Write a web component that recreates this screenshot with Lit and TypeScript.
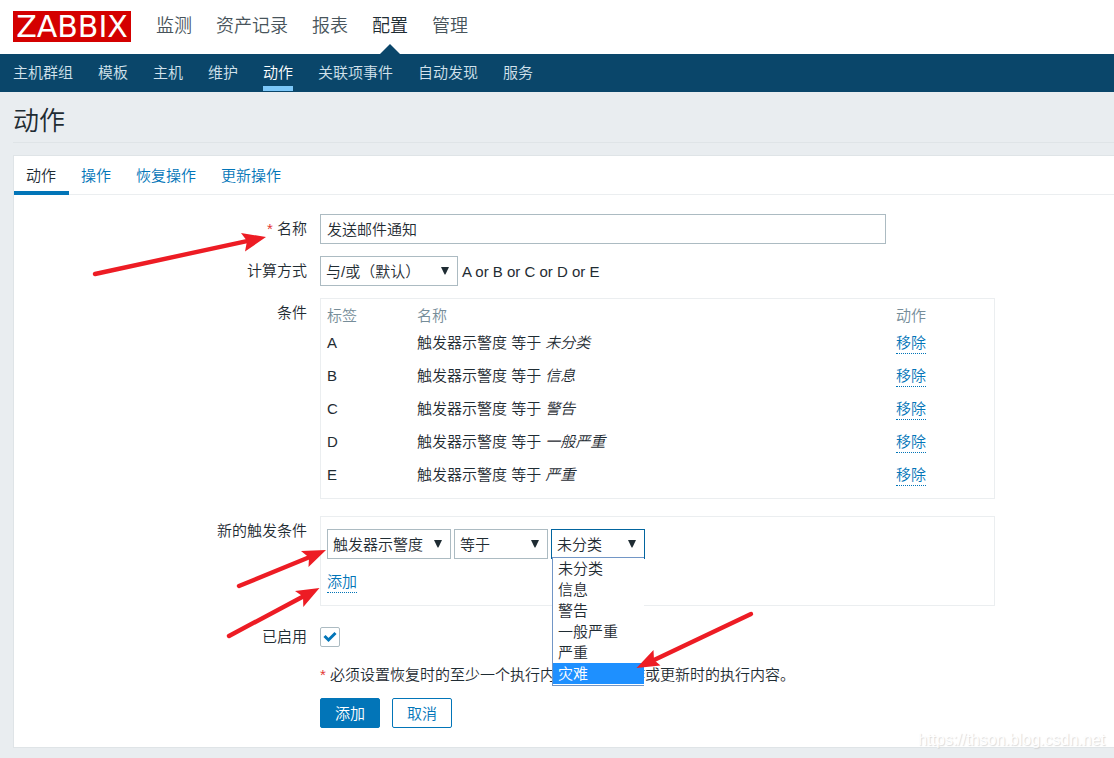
import { LitElement, html, css } from "lit";
import { customElement, state } from "lit/decorators.js";
import { classMap } from "lit/directives/class-map.js";

interface Condition {
  label: string;
  severity: string;
}

const MAIN_MENU = ["监测", "资产记录", "报表", "配置", "管理"];
const SUB_MENU = ["主机群组", "模板", "主机", "维护", "动作", "关联项事件", "自动发现", "服务"];
const TABS = ["动作", "操作", "恢复操作", "更新操作"];
const SEVERITIES = ["未分类", "信息", "警告", "一般严重", "严重", "灾难"];

const caret = html`<svg class="caret" width="8" height="8" viewBox="0 0 8 8" aria-hidden="true">
  <path d="M0 0h8L4.4 7.5h-.8z" fill="#1f2c33" />
</svg>`;

@customElement("app-root")
export class AppRoot extends LitElement {
  @state() private conditions: Condition[] = [
    { label: "A", severity: "未分类" },
    { label: "B", severity: "信息" },
    { label: "C", severity: "警告" },
    { label: "D", severity: "一般严重" },
    { label: "E", severity: "严重" },
  ];

  @state() private highlighted = "灾难";

  static styles = css`
    :host {
      display: block;
      position: relative;
      min-height: 100vh;
      overflow: hidden;
      background: #e9edf0;
      color: #1f2c33;
      font: 350 15px/20px "Liberation Sans", "Noto Sans CJK SC", sans-serif;
    }
    * {
      box-sizing: border-box;
    }
    a {
      color: #0275b8;
      text-decoration: none;
    }
    .top {
      display: flex;
      align-items: flex-start;
      height: 54px;
      padding-left: 13px;
      background: #fff;
    }
    .logo {
      width: 118px;
      height: 31px;
      margin: 11px 25px 0 0;
      background: #d40000;
      color: #fff;
      font: 400 30px/31px "DejaVu Sans", sans-serif;
      text-align: center;
    }
    .main-menu {
      display: flex;
      gap: 24px;
      height: 54px;
    }
    .main-menu a {
      display: flex;
      flex-direction: column;
      align-items: center;
      justify-content: space-between;
      padding-top: 13px;
      color: #48545b;
      font-size: 18px;
      line-height: 26px;
    }
    .main-menu .current {
      color: #1f2c33;
    }
    .pointer {
      border: 10px solid transparent;
      border-top: 0;
      border-bottom-color: #0a466a;
    }
    .sub-menu {
      display: flex;
      gap: 25px;
      height: 38px;
      padding: 0 13px;
      background: #0a466a;
    }
    .sub-menu a {
      height: 37px;
      border-bottom: 5px solid transparent;
      color: #d2e2ec;
      line-height: 37px;
      white-space: nowrap;
    }
    .sub-menu .current {
      border-color: #7cc7f8;
      color: #fff;
    }
    .page {
      padding: 0 0 10px 13px;
    }
    h1 {
      margin: 0 0 12px;
      border-bottom: 1px solid #dfe4e7;
      font-size: 26px;
      font-weight: 350;
      line-height: 30px;
      padding: 14px 0 6px;
    }
    .panel {
      border: 1px solid #dfe4e7;
      border-right: 0;
      background: #fff;
    }
    .tabs {
      display: flex;
      border-bottom: 1px solid #ebeef0;
    }
    .tabs a {
      height: 39px;
      margin-bottom: -1px;
      padding: 0 13px 0 12px;
      line-height: 39px;
    }
    .tabs .current {
      border-bottom: 4px solid #0275b8;
      color: #1f2c33;
    }
    form {
      padding: 19px 0;
    }
    .row {
      display: grid;
      grid-template-columns: 293px minmax(0, 675px);
      column-gap: 13px;
      margin-bottom: 12px;
    }
    .row.wide {
      margin-bottom: 17px;
    }
    .row.medium {
      margin-bottom: 16px;
    }
    .row.tight {
      margin-bottom: 8px;
    }
    .row:last-child {
      margin-bottom: 0;
    }
    .caption {
      line-height: 30px;
      text-align: right;
    }
    .required {
      color: #e33734;
    }
    .field {
      display: flex;
      align-items: center;
      gap: 4px;
      line-height: 30px;
    }
    .field.buttons {
      gap: 12px;
    }
    .formula {
      padding-top: 2px;
      line-height: 28px;
    }
    input[type="text"],
    select {
      height: 30px;
      margin: 0;
      border: 1px solid #acbbc2;
      border-radius: 0;
      background: #fff;
      color: inherit;
      font: inherit;
      outline: 0;
    }
    input[type="text"] {
      width: 100%;
      max-width: 566px;
      padding: 2px 6px 0;
    }
    .select {
      display: grid;
      position: relative;
      width: 94px;
    }
    .select.method {
      width: 138px;
    }
    .select.type {
      width: 124px;
    }
    select {
      grid-area: 1 / 1;
      width: 100%;
      padding: 0 20px 0 5px;
      appearance: none;
    }
    .select.open select {
      border-color: #02659f;
    }
    .caret {
      grid-area: 1 / 1;
      place-self: center end;
      margin-right: 9px;
      pointer-events: none;
    }
    .options {
      position: absolute;
      z-index: 1;
      top: 28px;
      left: 1px;
      width: 92px;
      margin: 0;
      padding: 0 0 1px;
      border: 1px solid #7296c6;
      border-right: 0;
      background: #fff;
      line-height: 21px;
      list-style: none;
    }
    .options li {
      padding-left: 5px;
    }
    .options .active {
      background: #1e90ff;
      color: #fff;
    }
    .box {
      border: 1px solid #ebeef0;
      padding: 6px 6px 7px;
    }
    .box.create {
      padding: 12px 6px;
    }
    .box.create .field {
      gap: 3px;
    }
    table {
      width: 100%;
      border-collapse: collapse;
      table-layout: fixed;
    }
    th {
      height: 21px;
      padding: 0;
      color: #768d99;
      font-weight: 350;
      text-align: left;
    }
    .col-label {
      width: 90px;
    }
    .col-action {
      width: 92px;
    }
    td {
      padding: 6px 0 5px;
      line-height: 21px;
      vertical-align: top;
    }
    .dotted {
      display: block;
      width: fit-content;
      border-bottom: 1px dotted #0275b8;
      line-height: 21px;
    }
    .box .field + .dotted {
      margin-top: 12px;
    }
    .check {
      display: grid;
      width: 20px;
      height: 20px;
    }
    .check input {
      grid-area: 1 / 1;
      width: 20px;
      height: 20px;
      margin: 0;
      border: 1px solid #acbbc2;
      border-radius: 2px;
      background: #fff;
      appearance: none;
    }
    .check svg {
      grid-area: 1 / 1;
      place-self: center;
      visibility: hidden;
      pointer-events: none;
    }
    .check input:checked + svg {
      visibility: visible;
    }
    .note {
      white-space: nowrap;
      line-height: 30px;
    }
    button {
      width: 60px;
      height: 30px;
      padding: 0;
      border: 1px solid #0275b8;
      border-radius: 2px;
      background: #fff;
      color: #0275b8;
      font: inherit;
    }
    button.primary {
      background: #0275b8;
      color: #fff;
    }
    .marks {
      position: absolute;
      z-index: 2;
      top: 0;
      left: 0;
      pointer-events: none;
    }
    .watermark {
      position: absolute;
      right: 9px;
      bottom: 8px;
      color: #fff;
      font-size: 16px;
      font-weight: 400;
      text-shadow: 1px 1px 1px #ccc;
      opacity: 0.7;
    }
  `;

  private remove(event: Event, row: Condition) {
    event.preventDefault();
    this.conditions = this.conditions.filter((c) => c !== row);
  }

  private links(items: string[], current: string) {
    return items.map(
      (item) => html`<a href="#" class=${classMap({ current: item === current })}>${item}</a>`
    );
  }

  render() {
    return html`
      <header>
        <div class="top">
          <a class="logo" href="#">ZABBIX</a>
          <nav class="main-menu">
            ${MAIN_MENU.map((item) =>
              item === "配置"
                ? html`<a href="#" class="current">${item}<span class="pointer"></span></a>`
                : html`<a href="#">${item}</a>`
            )}
          </nav>
        </div>
        <nav class="sub-menu">${this.links(SUB_MENU, "动作")}</nav>
      </header>

      <main class="page">
        <h1>动作</h1>
        <div class="panel">
          <nav class="tabs">${this.links(TABS, "动作")}</nav>
          <form @submit=${(e: Event) => e.preventDefault()}>
            <div class="row">
              <label class="caption" for="name"><span class="required">*</span> 名称</label>
              <div class="field"><input id="name" type="text" value="发送邮件通知" /></div>
            </div>

            <div class="row">
              <label class="caption" for="method">计算方式</label>
              <div class="field">
                <div class="select method">
                  <select id="method"><option>与/或（默认）</option></select>${caret}
                </div>
                <span class="formula">${this.conditions.map((c) => c.label).join(" or ")}</span>
              </div>
            </div>

            <div class="row wide">
              <span class="caption">条件</span>
              <div class="box">
                <table>
                  <thead>
                    <tr>
                      <th class="col-label">标签</th>
                      <th>名称</th>
                      <th class="col-action">动作</th>
                    </tr>
                  </thead>
                  <tbody>
                    ${this.conditions.map(
                      (c) => html`<tr>
                        <td>${c.label}</td>
                        <td>触发器示警度 等于 <em>${c.severity}</em></td>
                        <td>
                          <a class="dotted" href="#" @click=${(e: Event) => this.remove(e, c)}>移除</a>
                        </td>
                      </tr>`
                    )}
                  </tbody>
                </table>
              </div>
            </div>

            <div class="row medium">
              <label class="caption" for="type">新的触发条件</label>
              <div class="box create">
                <div class="field">
                  <div class="select type">
                    <select id="type"><option>触发器示警度</option></select>${caret}
                  </div>
                  <div class="select">
                    <select aria-label="运算符"><option>等于</option></select>${caret}
                  </div>
                  <div class="select open">
                    <select aria-label="示警度">
                      ${SEVERITIES.map((s) => html`<option>${s}</option>`)}
                    </select>${caret}
                    <ul class="options" role="listbox">
                      ${SEVERITIES.map(
                        (s) => html`<li
                          role="option"
                          class=${classMap({ active: s === this.highlighted })}
                          @mouseenter=${() => (this.highlighted = s)}
                        >${s}</li>`
                      )}
                    </ul>
                  </div>
                </div>
                <a class="dotted" href="#">添加</a>
              </div>
            </div>

            <div class="row tight">
              <label class="caption" for="enabled">已启用</label>
              <div class="field">
                <span class="check">
                  <input id="enabled" type="checkbox" checked />
                  <svg width="14" height="12" viewBox="0 0 14 12" aria-hidden="true">
                    <path d="M1.5 5L5.5 9L12.5 2" fill="none" stroke="#0275b8" stroke-width="3" />
                  </svg>
                </span>
              </div>
            </div>

            <div class="row tight">
              <span></span>
              <div class="note">
                <span class="required">*</span> 必须设置恢复时的至少一个执行内容，恢复操作或更新时的执行内容。
              </div>
            </div>

            <div class="row">
              <span></span>
              <div class="field buttons">
                <button class="primary" type="submit">添加</button>
                <button type="button">取消</button>
              </div>
            </div>
          </form>
        </div>
      </main>

      <svg class="marks" width="1114" height="758" viewBox="0 0 1114 758" aria-hidden="true">
        <g stroke="#ed1c24" stroke-width="4.4" stroke-linecap="round">
          <path d="M95 274L248 240.8" />
          <path d="M239 586L311 556.5" />
          <path d="M229 636L305 595.5" />
          <path d="M751 614L653 660.5" />
        </g>
        <g fill="#ed1c24">
          <path d="M266 237L241 233L247 241L245 251.500Z" />
          <path d="M326 550L301 551L309 557.500L308.500 567Z" />
          <path d="M319.500 588L295 591L303 596.500L303.300 607Z" />
          <path d="M636.500 668L653.500 650L654 660L660.500 665.500Z" />
        </g>
      </svg>
      <span class="watermark">https://thson.blog.csdn.net</span>
    `;
  }
}
